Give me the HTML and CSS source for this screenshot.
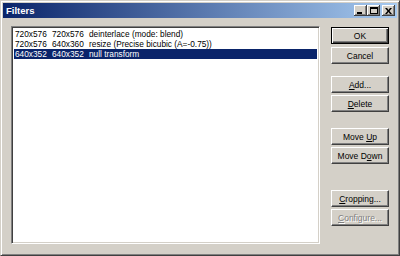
FILE: index.html
```html
<!DOCTYPE html>
<html>
  <head>
    <title>Filters</title>
    <link rel="stylesheet" href="styles.css">
  </head>
  <body>
    <div class="window">
      <div class="titlebar">
        <span class="title">Filters</span>
        <div class="caption-btns">
          <button class="cap"><span class="min"></span></button>
          <button class="cap"><span class="max"></span></button>
          <button class="cap close">
            <svg width="7" height="6" viewBox="0 0 7 6">
              <path d="M0 0h2l1.5 2 1.5-2h2l-2.5 3 2.5 3h-2l-1.5-2-1.5 2h-2l2.5-3z" fill="#000"/>
            </svg>
          </button>
        </div>
      </div>
      <div class="content">
        <div class="listbox">
          <div class="row"><span class="col">720x576</span><span class="col">720x576</span><span>deinterlace (mode: blend)</span></div>
          <div class="row"><span class="col">720x576</span><span class="col">640x360</span><span>resize (Precise bicubic (A=-0.75))</span></div>
          <div class="row selected"><span class="col">640x352</span><span class="col">640x352</span><span>null transform</span></div>
        </div>
        <div class="buttons">
          <button class="btn default">OK</button>
          <button class="btn gap-s">Cancel</button>
          <button class="btn gap-m"><u>A</u>dd...</button>
          <button class="btn gap-xs"><u>D</u>elete</button>
          <button class="btn gap-l">Move <u>U</u>p</button>
          <button class="btn gap-xs">Move D<u>o</u>wn</button>
          <button class="btn gap-xl"><u>C</u>ropping...</button>
          <button class="btn gap-xs" disabled><u>C</u>onfigure...</button>
        </div>
      </div>
    </div>
  </body>
</html>
```
FILE: styles.css
```css
html,
body {
  margin: 0;
  padding: 0;
  width: 400px;
  height: 256px;
  overflow: hidden;
  font-family: "Liberation Sans", Arial, sans-serif;
  font-size: 8.3px;
}
.window {
  box-sizing: border-box;
  width: 400px;
  height: 256px;
  background-color: #d4d0c8;
  border-top: 1px solid #d4d0c8;
  border-left: 1px solid #d4d0c8;
  border-right: 1px solid #404040;
  border-bottom: 1px solid #404040;
  box-shadow: inset 1px 1px 0 #ffffff, inset -1px -1px 0 #808080;
  padding: 2px;
  display: flex;
  flex-direction: column;
}
.titlebar {
  height: 15px;
  display: flex;
  align-items: center;
  justify-content: space-between;
  background: linear-gradient(to right, #0a246a, #a6caf0);
  padding: 0 2px 0 2px;
}
.title {
  color: #ffffff;
  font-weight: bold;
  font-size: 9.5px;
  padding-left: 1px;
}
.caption-btns {
  display: flex;
}
.cap {
  box-sizing: border-box;
  width: 13px;
  height: 11px;
  padding: 0;
  margin: 0;
  background-color: #d4d0c8;
  border: none;
  box-shadow: inset -1px -1px 0 #404040, inset 1px 1px 0 #ffffff, inset -2px -2px 0 #808080;
  display: flex;
  align-items: center;
  justify-content: center;
}
.cap.close {
  margin-left: 2px;
}
.min {
  width: 5px;
  height: 2px;
  background: #000;
  margin-top: 4px;
  margin-left: -2px;
}
.max {
  box-sizing: border-box;
  width: 8px;
  height: 7px;
  border: 1px solid #000;
  border-top-width: 2px;
}
.content {
  flex: 1;
  display: flex;
  padding: 8px 8px 9px 8px;
}
.listbox {
  box-sizing: border-box;
  width: 311px;
  height: 218px;
  background: #ffffff;
  border-top: 1px solid #808080;
  border-left: 1px solid #808080;
  border-right: 1px solid #ffffff;
  border-bottom: 1px solid #ffffff;
  box-shadow: inset 1px 1px 0 #404040, inset -1px -1px 0 #d4d0c8;
  padding: 2px;
}
.row {
  height: 10px;
  line-height: 10px;
  white-space: nowrap;
  padding-left: 1px;
  color: #000;
}
.row.selected {
  background: #0a246a;
  color: #ffffff;
}
.col {
  display: inline-block;
  width: 37px;
}
.buttons {
  display: flex;
  flex-direction: column;
  margin-left: 11px;
  padding-top: 1px;
}
.btn {
  box-sizing: border-box;
  width: 58px;
  height: 17px;
  margin: 0;
  padding: 0;
  font-family: "Liberation Sans", Arial, sans-serif;
  font-size: 8.5px;
  color: #000;
  background: #d4d0c8;
  border-top: 1px solid #ffffff;
  border-left: 1px solid #ffffff;
  border-right: 1px solid #404040;
  border-bottom: 1px solid #404040;
  box-shadow: inset -1px -1px 0 #808080;
  text-align: center;
}
.btn.default {
  border: 1px solid #000;
  box-shadow: inset 1px 1px 0 #ffffff, inset -1px -1px 0 #404040, inset -2px -2px 0 #808080;
}
.btn:disabled {
  color: #808080;
  text-shadow: 1px 1px 0 #ffffff;
}
.gap-xs {
  margin-top: 2px;
}
.gap-s {
  margin-top: 3px;
}
.gap-m {
  margin-top: 12px;
}
.gap-l {
  margin-top: 16px;
}
.gap-xl {
  margin-top: 26px;
}
```
